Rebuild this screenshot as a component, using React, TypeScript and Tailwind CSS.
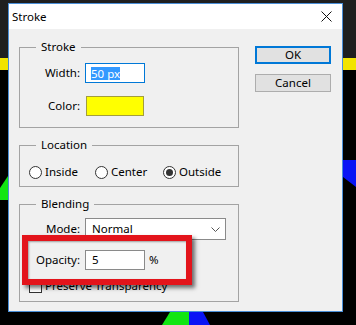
import React from "react";

function Radio({ label, checked, className }: { label: string; checked?: boolean; className?: string }) {
  return (
    <div className={`flex items-center ${className ?? ""}`}>
      <span className="flex h-[13px] w-[13px] shrink-0 items-center justify-center rounded-full border border-[#333333] bg-white">
        {checked && <span className="h-[7px] w-[7px] rounded-full bg-[#333333]" />}
      </span>
      <span className="ml-[3px]">{label}</span>
    </div>
  );
}

function Group({ title, className, children }: { title: string; className?: string; children: React.ReactNode }) {
  return (
    <fieldset className={`w-[220px] border border-[#a3a3a3] ${className ?? ""}`}>
      <legend className="ml-[16px] px-[5px] leading-[16px]">{title}</legend>
      {children}
    </fieldset>
  );
}

export default function App() {
  return (
    <div className="relative h-[325px] w-[356px] overflow-hidden bg-black pl-[8px] pt-[3px] font-['Noto_Sans',sans-serif] text-[11.5px] text-black">
      {/* picture behind the dialog */}
      <svg className="absolute inset-0" width="356" height="325" viewBox="0 0 356 325">
        <rect x="0" y="0" width="356" height="58" fill="#1f1f1f" />
        <rect x="0" y="58" width="356" height="12" fill="#f2e400" />
        <polygon points="343,160 356,160 356,187 343,177" fill="#0a14f5" />
        <polygon points="0,188 8,176 8,200 0,200" fill="#12e612" />
        <polygon points="170,312 189,312 189,325 162,325" fill="#12e612" />
        <polygon points="189,312 203,312 210,325 189,325" fill="#0a14f5" />
      </svg>

      {/* dialog */}
      <div className="relative z-10 flex h-[309px] w-[335px] flex-col border border-[#4a8fd8]">
        <div className="flex h-[25px] items-center justify-between bg-white pl-[3px] pr-[10px]">
          <span>Stroke</span>
          <svg width="11" height="11" viewBox="0 0 11 11">
            <path d="M0.5 0.5 L10.5 10.5 M10.5 0.5 L0.5 10.5" stroke="#111" strokeWidth="1" fill="none" />
          </svg>
        </div>

        <div className="flex flex-1 bg-[#f0f0f0] pl-[10px] pt-[10px]">
          <div className="flex flex-col">
            <Group title="Stroke">
              <div className="pb-[11px] pt-[8px]">
                <div className="flex items-center">
                  <span className="w-[60px] text-right">Width:</span>
                  <div className="ml-[5px] flex h-[20px] w-[60px] items-center border border-[#0078d7] bg-white pl-[5px]">
                    <span className="bg-[#3399ff] leading-[13px] text-white">50 px</span>
                  </div>
                </div>
                <div className="mt-[13px] flex items-center">
                  <span className="w-[60px] text-right">Color:</span>
                  <div className="ml-[6px] h-[20px] w-[58px] border border-[#a39e3c] bg-[#ffff00]" />
                </div>
              </div>
            </Group>

            <Group title="Location" className="mt-[9px]">
              <div className="mb-[6px] mt-[11px] flex h-[16px] items-center pl-[9px]">
                <Radio label="Inside" className="w-[66px]" />
                <Radio label="Center" className="w-[68px]" />
                <Radio label="Outside" checked />
              </div>
            </Group>

            <Group title="Blending" className="mt-[9px]">
              <div className="pb-[7px] pt-[6px]">
                <div className="flex items-center">
                  <span className="w-[60px] text-right">Mode:</span>
                  <div className="ml-[5px] flex h-[22px] w-[141px] items-center justify-between border border-[#8a8a8a] bg-white pl-[6px] pr-[5px]">
                    <span>Normal</span>
                    <svg width="9" height="5" viewBox="0 0 9 5">
                      <path d="M0.5 0.5 L4.5 4.5 L8.5 0.5" stroke="#555" strokeWidth="1" fill="none" />
                    </svg>
                  </div>
                </div>
                <div className="mt-[10px] flex items-center">
                  <span className="w-[60px] text-right">Opacity:</span>
                  <div className="ml-[5px] flex h-[20px] w-[60px] items-center border border-[#8a8a8a] bg-white pl-[6px]">
                    5
                  </div>
                  <span className="ml-[4px]">%</span>
                </div>
                <div className="mt-[8px] flex h-[16px] items-center pl-[9px]">
                  <span className="h-[13px] w-[13px] border border-[#333333] bg-white" />
                  <span className="ml-[3px]">Preserve Transparency</span>
                </div>
              </div>
            </Group>
          </div>

          <div className="ml-[16px] mt-[7px] flex flex-col">
            <button className="h-[18px] w-[76px] border-2 border-[#0078d7] bg-[#e1e1e1] text-[11.5px] leading-none">
              OK
            </button>
            <button className="mt-[10px] h-[18px] w-[76px] border border-[#adadad] bg-[#e1e1e1] text-[11.5px] leading-none">
              Cancel
            </button>
          </div>
        </div>
      </div>

      {/* red highlight annotation */}
      <div className="absolute left-[22px] top-[235px] z-20 h-[50px] w-[170px] border-[6px] border-[#e3141b] shadow-[3px_3px_4px_rgba(0,0,0,0.55),inset_1px_1px_2px_rgba(0,0,0,0.35)]" />
    </div>
  );
}
